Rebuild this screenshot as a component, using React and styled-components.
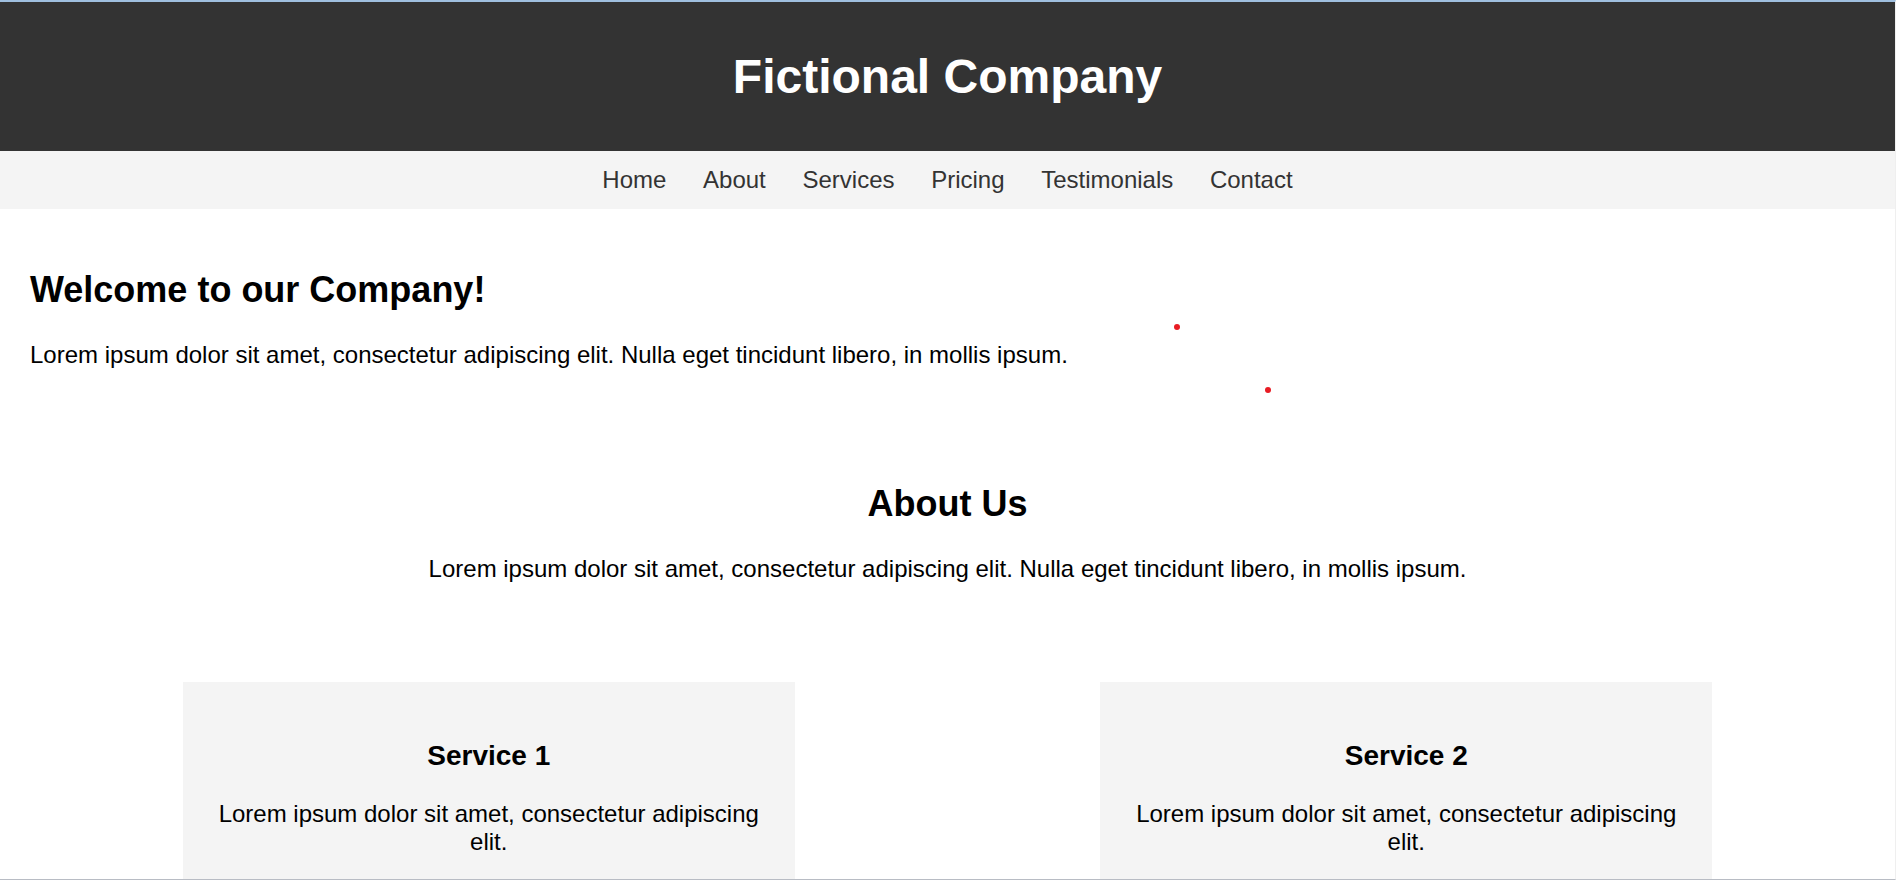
import React from "react";
import styled, { createGlobalStyle } from "styled-components";

const GlobalStyle = createGlobalStyle`
  *, *::before, *::after { box-sizing: border-box; }
  body {
    margin: 0;
    background: #fff;
    color: #000;
    font-family: Arial, "Liberation Sans", sans-serif;
    font-size: 24px;
    line-height: 28px;
  }
`;

const Page = styled.div`
  position: relative;
  height: 100vh;
  overflow: hidden;
  border-top: 2px solid #9fbfdf;
  border-bottom: 1px solid #b8bcc4;
  border-right: 1px solid #efefef;
`;

const Header = styled.header`
  padding: 46px 30px;
  background: #333;
  color: #fff;
  text-align: center;
`;

const Title = styled.h1`
  margin: 0;
  font-size: 48px;
  line-height: 57px;
`;

const Nav = styled.nav`
  padding: 15px;
  background: #f4f4f4;
`;

const NavList = styled.ul`
  margin: 0;
  padding: 0;
  list-style: none;
  text-align: center;
`;

const NavItem = styled.li`
  display: inline;
  margin: 0 15px;
`;

const NavLink = styled.a`
  color: #333;
  text-decoration: none;
`;

const Section = styled.section`
  padding: 60px 30px 54px;
  text-align: ${({ $centered }) => ($centered ? "center" : "left")};
`;

const Heading = styled.h2`
  margin: 0 0 30px;
  font-size: 36px;
  line-height: 42px;
`;

const CardHeading = styled.h3`
  margin: 0 0 28px;
  font-size: 28px;
  line-height: 32px;
`;

const Text = styled.p`
  margin: 0;
`;

const Services = styled.section`
  display: flex;
  justify-content: space-around;
  padding: 45px 30px;
`;

const Card = styled.article`
  width: calc(100% / 3);
  padding: 58px 30px;
  background: #f4f4f4;
  text-align: center;
`;

const Dot = styled.span`
  position: absolute;
  left: ${({ $x }) => $x}px;
  top: ${({ $y }) => $y}px;
  width: 6px;
  height: 6px;
  border-radius: 50%;
  background: #e81c24;
`;

const links = ["Home", "About", "Services", "Pricing", "Testimonials", "Contact"];
const services = ["Service 1", "Service 2"];
const intro =
  "Lorem ipsum dolor sit amet, consectetur adipiscing elit. Nulla eget tincidunt libero, in mollis ipsum.";

export default function App() {
  return (
    <Page>
      <GlobalStyle />
      <Header>
        <Title>Fictional Company</Title>
      </Header>
      <Nav>
        <NavList>
          {links.map((label) => (
            <React.Fragment key={label}>
              <NavItem>
                <NavLink href={`#${label.toLowerCase()}`}>{label}</NavLink>
              </NavItem>{" "}
            </React.Fragment>
          ))}
        </NavList>
      </Nav>
      <main>
        <Section id="home">
          <Heading>Welcome to our Company!</Heading>
          <Text>{intro}</Text>
        </Section>
        <Section id="about" $centered>
          <Heading>About Us</Heading>
          <Text>{intro}</Text>
        </Section>
        <Services id="services">
          {services.map((name) => (
            <Card key={name}>
              <CardHeading>{name}</CardHeading>
              <Text>Lorem ipsum dolor sit amet, consectetur adipiscing elit.</Text>
            </Card>
          ))}
        </Services>
      </main>
      <Dot $x={1174} $y={322} />
      <Dot $x={1265} $y={385} />
    </Page>
  );
}
